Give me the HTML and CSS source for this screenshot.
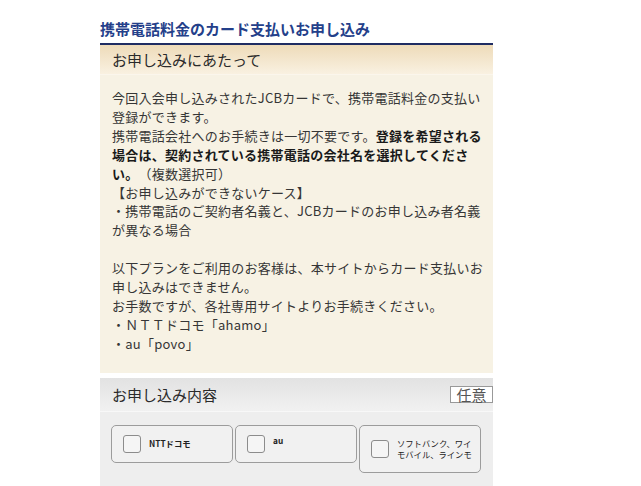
FILE: index.html
```html
<!DOCTYPE html>
<html lang="ja">
<head>
<meta charset="utf-8">
<title>携帯電話料金のカード支払いお申し込み</title>
<link rel="stylesheet" href="styles.css">
</head>
<body>
<div class="page">
  <h1 class="title">携帯電話料金のカード支払いお申し込み</h1>

  <section class="notice">
    <h2 class="notice-head">お申し込みにあたって</h2>
    <div class="notice-body">
      今回入会申し込みされたJCBカードで、携帯電話料金の支払い登録ができます。<br>
      携帯電話会社へのお手続きは一切不要です。<strong>登録を希望される</strong><strong>場合は、契約されている携帯電話の会社名を選択してくださ</strong><strong>い。</strong>（複数選択可）<br>
      【お申し込みができないケース】<br>
      ・携帯電話のご契約者名義と、JCBカードのお申し込み者名義が異なる場合<br>
      <br>
      以下プランをご利用のお客様は、本サイトからカード支払いお申し込みはできません。<br>
      お手数ですが、各社専用サイトよりお手続きください。<br>
      ・ＮＴＴドコモ「ahamo」<br>
      ・au「povo」
    </div>
  </section>

  <section class="form">
    <div class="form-head">
      <h2 class="form-title">お申し込み内容</h2>
      <span class="badge">任意</span>
    </div>
    <div class="options">
      <label class="option">
        <span class="check"></span>
        <span class="opt-label bold">NTTドコモ</span>
      </label>
      <label class="option">
        <span class="check"></span>
        <span class="opt-label bold raised">au</span>
      </label>
      <label class="option">
        <span class="check"></span>
        <span class="opt-label">ソフトバンク、ワイ<br>モバイル、ラインモ</span>
      </label>
    </div>
  </section>
</div>
</body>
</html>
```

FILE: styles.css
```css
html, body {
  margin: 0;
  padding: 0;
  background: #ffffff;
}

body {
  font-family: "Noto Sans CJK JP", "Noto Sans", "Liberation Sans", sans-serif;
  color: #333333;
  text-spacing-trim: space-all;
}

.page {
  width: 393px;
  margin-left: 100px;
}

.title {
  margin: 19px 0 0;
  padding: 0 0 4px;
  font-size: 15px;
  line-height: 20px;
  font-weight: 700;
  color: #24408a;
  border-bottom: 2px solid #1f2c62;
}

.notice-head {
  margin: 0;
  padding: 0 12px;
  height: 29px;
  line-height: 29px;
  font-size: 15px;
  font-weight: 400;
  color: #2a2a2a;
  background: linear-gradient(#eedbb9, #f9f1e1);
  border-bottom: 1px solid #fbf6ec;
}

.notice-body {
  background: #f7f2e4;
  padding: 14px 5px 19px 12px;
  font-size: 13px;
  letter-spacing: 0.25px;
  line-height: 18.9px;
  color: #363636;
}

.notice-body strong {
  font-weight: 700;
  color: #1a1a1a;
}

.form {
  margin-top: 5px;
}

.form-head {
  display: flex;
  align-items: center;
  justify-content: space-between;
  height: 33px;
  padding-left: 12px;
  background: linear-gradient(#e2e2e2, #f1f1f1);
  border-bottom: 1px solid #f8f8f8;
}

.form-title {
  margin: 0;
  font-size: 15px;
  font-weight: 400;
  color: #2a2a2a;
}

.badge {
  box-sizing: border-box;
  width: 43px;
  height: 17px;
  line-height: 15px;
  text-align: center;
  font-size: 15px;
  color: #555555;
  background: #ffffff;
  border: 1px solid #999999;
}

.options {
  display: flex;
  align-items: flex-start;
  gap: 2px;
  padding: 13px 0 20px 11px;
  background: #eeeeee;
}

.option {
  box-sizing: border-box;
  display: flex;
  align-items: center;
  gap: 8px;
  width: 122px;
  min-height: 38px;
  padding: 0 3px 0 11px;
  background: #f1f1f1;
  border: 1px solid #9c9c9c;
  border-radius: 5px;
}

.check {
  flex: none;
  box-sizing: border-box;
  width: 18px;
  height: 18px;
  background: #f5f5f5;
  border: 1px solid #8c8c8c;
  border-radius: 3px;
}

.opt-label {
  padding: 12px 0;
  font-size: 8.3px;
  line-height: 11px;
  color: #222222;
  white-space: nowrap;
}

.opt-label.bold {
  font-weight: 700;
}

.opt-label.raised {
  padding: 6px 0 12px;
}
```
